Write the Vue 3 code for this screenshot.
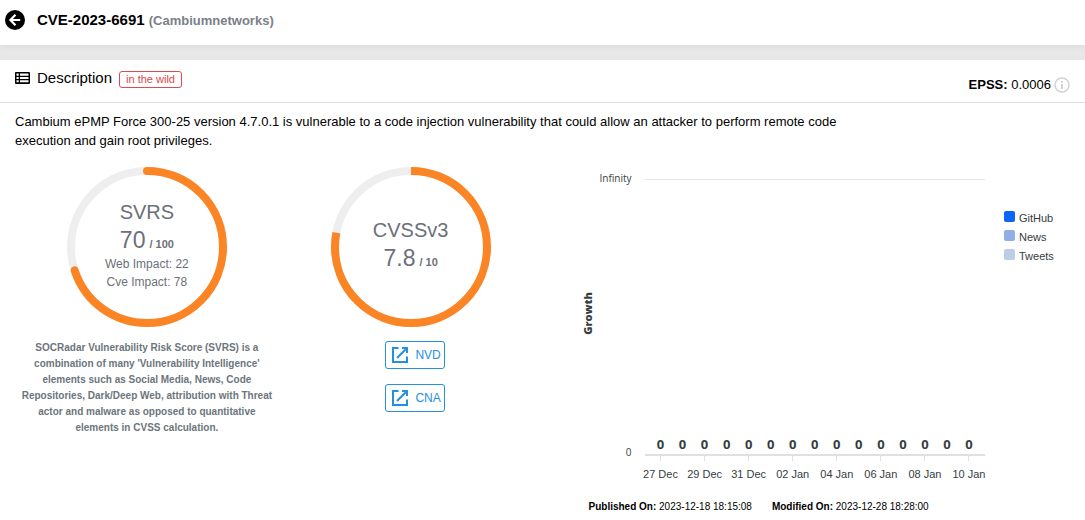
<script setup>
const legend = [
  { name: 'GitHub', tone: 'github' },
  { name: 'News', tone: 'news' },
  { name: 'Tweets', tone: 'tweets' },
]

const dates = ['27 Dec', '', '29 Dec', '', '31 Dec', '', '02 Jan', '', '04 Jan', '', '06 Jan', '', '08 Jan', '', '10 Jan']
const points = dates.map((label, id) => ({ id, label, value: 0 }))
const links = ['NVD', 'CNA']
</script>

<template>
  <div class="page">
    <header class="topbar">
      <button class="back" type="button" aria-label="Back">
        <svg viewBox="0 0 20 20" width="20" height="20" aria-hidden="true">
          <circle cx="10" cy="10" r="10" fill="#000" />
          <path d="M10.5 4.8 5.4 10l5.1 5.2M5.6 10h9.6" fill="none" stroke="#fff" stroke-width="2.2" />
        </svg>
      </button>
      <h1>CVE-2023-6691 <small>(Cambiumnetworks)</small></h1>
    </header>

    <main class="card">
      <div class="card-head">
        <div class="title">
          <svg viewBox="0 0 15 12" width="15" height="12" aria-hidden="true">
            <rect x="0" y="0" width="15" height="12" rx="1" fill="#000" />
            <path d="M1.5 1.6h2.2v2.100H1.500zM5 1.600h8.500v2.100H5zM1.500 4.900h2.200v2.100H1.500zM5 4.900h8.500v2.100H5zM1.500 8.200h2.200v2.100H1.500zM5 8.200h8.500v2.100H5z" fill="#fff" />
          </svg>
          <h2>Description</h2>
          <span class="tag">in the wild</span>
        </div>
        <div class="epss">
          <span><b>EPSS:</b> 0.0006</span>
          <svg viewBox="0 0 16 16" width="16" height="16" aria-hidden="true">
            <circle cx="8" cy="8" r="7" fill="none" stroke="#d2d2d2" stroke-width="1.5" />
            <path d="M7 4h2v1.800H7zM7 7h2v5H7z" fill="#d2d2d2" />
          </svg>
        </div>
      </div>

      <p class="summary">
        Cambium ePMP Force 300-25 version 4.7.0.1 is vulnerable to a code injection vulnerability that could allow an attacker to perform remote code execution and gain root privileges.
      </p>

      <div class="columns">
        <section class="score">
          <div class="gauge">
            <svg viewBox="0 0 160 160" aria-hidden="true">
              <circle cx="80" cy="80" r="76" fill="none" stroke="#eee" stroke-width="8" />
              <circle cx="80" cy="80" r="76" fill="none" stroke="#fb8424" stroke-width="8" stroke-linecap="round" pathLength="100" stroke-dasharray="70 100" transform="rotate(-90 80 80)" />
            </svg>
            <div class="gauge-text">
              <span class="name">SVRS</span>
              <div class="value"><span>70</span><b>/ 100</b></div>
              <span class="impact">Web Impact: 22</span>
              <span class="impact">Cve Impact: 78</span>
            </div>
          </div>
          <p class="note">
            SOCRadar Vulnerability Risk Score (SVRS) is a<br />
            combination of many 'Vulnerability Intelligence'<br />
            elements such as Social Media, News, Code<br />
            Repositories, Dark/Deep Web, attribution with Threat<br />
            actor and malware as opposed to quantitative<br />
            elements in CVSS calculation.
          </p>
        </section>

        <section class="score">
          <div class="gauge">
            <svg viewBox="0 0 160 160" aria-hidden="true">
              <circle cx="80" cy="80" r="76" fill="none" stroke="#eee" stroke-width="8" />
              <circle cx="80" cy="80" r="76" fill="none" stroke="#fb8424" stroke-width="8" pathLength="100" stroke-dasharray="78 100" transform="rotate(-90 80 80)" />
            </svg>
            <div class="gauge-text">
              <span class="name">CVSSv3</span>
              <div class="value"><span>7.8</span><b>/ 10</b></div>
            </div>
          </div>
          <nav class="links">
            <a v-for="link in links" :key="link" href="#">
              <svg viewBox="0 0 18 18" width="18" height="18" aria-hidden="true">
                <path d="M7.500 2H2v14h14v-5.500M11 2H16v5M15.500 2.500 6 12" fill="none" stroke="#2490e0" stroke-width="2" />
              </svg>
              {{ link }}
            </a>
          </nav>
        </section>

        <section class="growth">
          <div class="chart">
            <div class="axis-title"><span>Growth</span></div>
            <div class="scale"><span>Infinity</span><span>0</span></div>
            <div class="plot">
              <div class="area">
                <span v-for="p in points" :key="p.id">{{ p.value }}</span>
              </div>
              <div class="days">
                <div v-for="p in points" :key="p.id" :class="{ tick: p.label }"><span>{{ p.label }}</span></div>
              </div>
            </div>
            <ul class="legend">
              <li v-for="item in legend" :key="item.name"><i :class="item.tone"></i><span>{{ item.name }}</span></li>
            </ul>
          </div>
          <p class="dates">
            <span><b>Published On:</b> 2023-12-18 18:15:08</span>
            <span><b>Modified On:</b> 2023-12-28 18:28:00</span>
          </p>
        </section>
      </div>
    </main>
  </div>
</template>

<style>
body {
  margin: 0;
  background: #fff;
}
</style>

<style scoped>
.page {
  font-family: "Liberation Sans", Arial, sans-serif;
  color: #000;
  background: #e8e8e8;
}
h1, h2, p, ul {
  margin: 0;
  padding: 0;
}
svg {
  display: block;
}
.topbar {
  display: flex;
  align-items: center;
  gap: 12px;
  height: 40px;
  padding: 0 5px 5px;
  background: #fff;
  box-shadow: 0 1px 6px #d8d8d8;
}
.back {
  padding: 0;
  border: 0;
  background: none;
}
h1 {
  font-size: 15px;
  line-height: 20px;
}
h1 small {
  font-size: 13px;
  color: #7b8088;
}
.card {
  margin-top: 15px;
  background: #fff;
}
.card-head {
  display: flex;
  justify-content: space-between;
  height: 42px;
  padding: 0 15px;
  border-bottom: 1px solid #dedede;
}
.title, .epss {
  display: flex;
  align-items: center;
}
.title {
  gap: 7px;
  height: 36px;
}
h2 {
  font-size: 15px;
  font-weight: 400;
  line-height: 18px;
}
.tag {
  margin-top: 3px;
  padding: 0 6px;
  border: 1px solid #dc4c4c;
  border-radius: 3px;
  font-size: 11px;
  line-height: 15px;
  color: #d94848;
}
.epss {
  gap: 3px;
  padding-top: 7px;
  font-size: 13px;
}
.summary {
  max-width: 860px;
  padding: 9px 15px 0;
  font-size: 13px;
  line-height: 19px;
}
.columns {
  display: grid;
  grid-template-columns: 1fr 1fr 2fr;
  padding: 17px 15px 4px;
}
.score {
  display: flex;
  flex-direction: column;
  align-items: center;
}
.gauge {
  display: grid;
  width: 160px;
  height: 160px;
}
.gauge > * {
  grid-area: 1 / 1;
}
.gauge-text {
  display: flex;
  flex-direction: column;
  align-items: center;
  justify-content: center;
  padding-bottom: 4px;
  color: #6c7079;
}
.name {
  font-size: 20px;
  line-height: 26px;
}
.value {
  display: flex;
  align-items: baseline;
  gap: 4px;
  font-size: 23px;
  line-height: 30px;
}
.value b {
  font-size: 11px;
  line-height: 14px;
}
.impact {
  font-size: 12px;
  line-height: 18px;
}
.note {
  margin-top: 13px;
  font-size: 10px;
  font-weight: 700;
  line-height: 16px;
  text-align: center;
  white-space: nowrap;
  color: #6c757d;
}
.links {
  display: flex;
  flex-direction: column;
  gap: 15px;
  margin-top: 14px;
  padding-left: 9px;
}
.links a {
  display: flex;
  align-items: center;
  gap: 6px;
  height: 26px;
  padding: 0 3px 0 5px;
  border: 1px solid #2490e0;
  border-radius: 3px;
  font-size: 12px;
  color: #2490e0;
  text-decoration: none;
}
.growth {
  padding-left: 39px;
}
.chart {
  display: grid;
  grid-template-columns: 12px 38px 1fr 66px;
  padding-top: 4px;
  color: #373d3f;
}
.axis-title {
  display: flex;
  align-items: center;
  justify-content: center;
  padding-bottom: 26px;
  font-family: "Open Sans", sans-serif;
  font-size: 11px;
  font-weight: 800;
}
.axis-title span {
  writing-mode: vertical-rl;
  transform: rotate(180deg);
}
.scale {
  display: flex;
  flex-direction: column;
  justify-content: space-between;
  align-items: flex-end;
  height: 288px;
  font-family: "Open Sans", sans-serif;
  font-size: 10px;
  line-height: 14px;
}
.plot {
  margin: 8px 19px 0 13px;
}
.area, .days {
  display: grid;
  grid-template-columns: repeat(15, 1fr);
  padding: 0 5px;
}
.area {
  align-items: end;
  height: 274px;
  border-top: 1px solid #e4e4e4;
  border-bottom: 2px solid #e0e0e0;
  font-family: "Open Sans", sans-serif;
  font-size: 13px;
  font-weight: 700;
  line-height: 20px;
  text-align: center;
}
.days div {
  display: flex;
  flex-direction: column;
  align-items: center;
  font-size: 11px;
  line-height: 16px;
  white-space: nowrap;
}
.days span {
  margin: 0 -11px;
}
.days div::before {
  content: "";
  width: 1px;
  height: 5px;
  margin-bottom: 5px;
}
.days .tick::before {
  background: #e0e0e0;
}
.legend {
  padding-top: 37px;
  list-style: none;
}
.legend li {
  display: flex;
  align-items: center;
  gap: 4px;
  height: 19px;
  font-size: 11px;
}
.legend i {
  width: 11px;
  height: 11px;
  margin-bottom: 3px;
  border-radius: 2px;
}
.github {
  background: #0d64f8;
}
.news {
  background: #92aee6;
}
.tweets {
  background: #bccdea;
}
.dates {
  display: flex;
  gap: 20px;
  padding: 18px 0 0 7px;
  font-size: 10px;
  line-height: 14px;
  white-space: nowrap;
}
</style>
